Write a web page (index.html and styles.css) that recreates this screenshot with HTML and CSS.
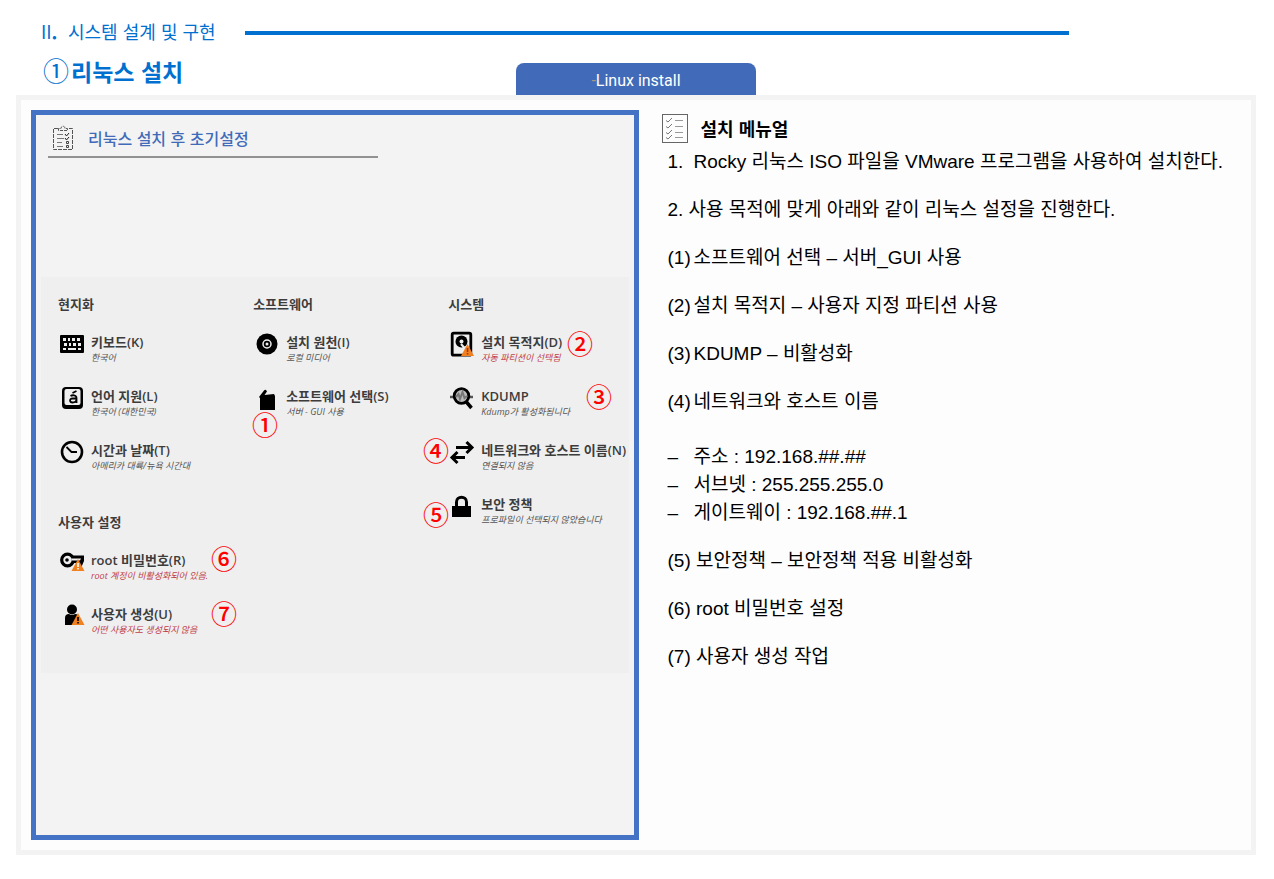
FILE: index.html
```html
<!DOCTYPE html>
<html lang="ko">
<head>
	<meta charset="utf-8">
	<meta name="viewport" content="width=device-width, initial-scale=1">
	<title>리눅스 설치</title>

	<link rel="stylesheet" href="styles.css">
</head>
<body>
	<header class="header">
		<div class="chapter">
			<p class="chapter-name"><span class="chapter-number">II<b>.</b></span>시스템 설계 및 구현</p>
			<div class="chapter-line"></div>
		</div>
		<div class="title-row">
			<h1 class="title"><span class="title-number">①</span>리눅스 설치</h1>
			<div class="tab"><span class="tab-dash">-</span>Linux install</div>
		</div>
	</header>

	<main class="frame">
		<section class="panel">
			<div class="panel-header">
				<svg class="panel-icon" width="22" height="26" viewBox="0 0 22 26" fill="none" stroke="#555">
					<path d="M6 3.500H1.500V24.500H20.500V3.500H16" stroke-dasharray="4 1"/>
					<path d="M6.500 5.500V3.500H9C9 .5 13 .5 13 3.500H15.500V5.500Z" stroke-dasharray="3 1"/>
					<path d="M5 9.500H11M5 13.500H12M5 17.500H10M5 21.500H11" stroke="#777"/>
					<path d="M13 9L14.500 11L17 8M13 13L14.500 15L17 12" stroke="#222"/>
					<path d="M14.500 16.500H16.500V18.500H14.500ZM14.500 20.500H16.500V22.500H14.500Z" stroke="#444"/>
				</svg>
				<h2 class="panel-title">리눅스 설치 후 초기설정</h2>
			</div>

			<div class="installer">
				<div class="col">
					<h3 class="group">현지화</h3>
					<button class="item">
						<svg class="icon" viewBox="0 0 24 24">
							<rect y="3" width="24" height="18" rx="1"/>
							<path d="M3 6h3v3H3zM8 6h2v3H8zM12 6h3v3h-3zM17 6h3v3h-3zM4 11h3v3H4zM9 11h2v3H9zM13 11h3v3h-3zM18 11h3v3h-3zM3 16h3v2H3zM8 16h8v2H8zM18 16h3v2h-3z" fill="#efefef"/>
						</svg>
						<span class="text"><b>키보드(K)</b><i>한국어</i></span>
					</button>
					<button class="item">
						<svg class="icon" viewBox="0 0 24 24">
							<rect x="2" y="1" width="21" height="22" rx="4"/>
							<rect x="4.500" y="3" width="16" height="16" rx="2" fill="#efefef"/>
							<path d="M10.500 10C12 9 16.500 8.500 16.500 12V17M16.500 12.500H12.500C9 12.500 9.500 16.500 12.500 16.500C15 16.500 16.500 15 16.500 13M12.500 7L16.500 5" fill="none" stroke="#000" stroke-width="1.800"/>
						</svg>
						<span class="text"><b>언어 지원(L)</b><i>한국어 (대한민국)</i></span>
					</button>
					<button class="item">
						<svg class="icon" viewBox="0 0 24 24" fill="none" stroke="#000">
							<circle cx="12" cy="12" r="10" stroke-width="2.600"/>
							<path d="M6.500 7L11.500 12H17" stroke-width="1.800"/>
						</svg>
						<span class="text"><b>시간과 날짜(T)</b><i>아메리카 대륙/뉴욕 시간대</i></span>
					</button>

					<h3 class="group group-user">사용자 설정</h3>
					<button class="item">
						<svg class="icon" viewBox="0 0 24 24">
							<path d="M11 5.500H24V11L21 18H17V13H11Z"/>
							<circle cx="7.500" cy="10" r="5.800" fill="#efefef" stroke="#000" stroke-width="3.200"/>
							<path d="M11.500 8.500H21L20 10.500H11.500Z" fill="#efefef"/>
							<circle cx="7" cy="10" r="1.800"/>
							<path d="M18 9L24.500 21H11.500Z" fill="#f08020"/>
							<path d="M17.200 13h1.600v4h-1.600zM17.200 18h1.600v1.500h-1.600z" fill="#fff"/>
						</svg>
						<span class="text"><b>root 비밀번호(R)</b><i class="warning">root 계정이 비활성화되어 있음.</i></span>
					</button>
					<button class="item">
						<svg class="icon" viewBox="0 0 24 24">
							<circle cx="12" cy="5.500" r="5"/>
							<path d="M5 21V14Q5 10 9 10Q12 12 15 10Q19 10 19 14V21Z"/>
							<path d="M18 9L24.500 21H11.500Z" fill="#f08020"/>
							<path d="M17.200 13h1.600v4h-1.600zM17.200 18h1.600v1.500h-1.600z"/>
						</svg>
						<span class="text"><b>사용자 생성(U)</b><i class="warning">어떤 사용자도 생성되지 않음</i></span>
					</button>
				</div>

				<div class="col">
					<h3 class="group">소프트웨어</h3>
					<button class="item">
						<svg class="icon" viewBox="0 0 24 24">
							<circle cx="12" cy="12" r="10.500"/>
							<circle cx="12" cy="12" r="4" fill="none" stroke="#efefef" stroke-width="1.500"/>
							<circle cx="12" cy="12" r="1.500" fill="#efefef"/>
						</svg>
						<span class="text"><b>설치 원천(I)</b><i>로컬 미디어</i></span>
					</button>
					<button class="item">
						<svg class="icon" viewBox="0 0 24 24">
							<path d="M4 11L9 4.500Q10 3.500 11 4L12 5.500L9.500 9L19 8L20 10V24H5V12Z"/>
						</svg>
						<span class="text"><b>소프트웨어 선택(S)</b><i>서버 - GUI 사용</i></span>
					</button>
				</div>

				<div class="col">
					<h3 class="group">시스템</h3>
					<button class="item">
						<svg class="icon" viewBox="0 0 24 24">
							<rect x="2.200" y="1.200" width="18.600" height="22" rx="1.500" fill="#efefef" stroke="#000" stroke-width="2.800"/>
							<circle cx="11.500" cy="9.500" r="6"/>
							<circle cx="11.500" cy="9.500" r="2" fill="#efefef"/>
							<path d="M11 12L18 20" stroke="#efefef" stroke-width="2"/>
							<path d="M17.500 12L24 24H11Z" fill="#f08020"/>
							<path d="M16.800 16h1.500v4h-1.500zM16.800 21h1.500v1.500h-1.500z" fill="#b03010"/>
						</svg>
						<span class="text"><b>설치 목적지(D)</b><i class="warning">자동 파티션이 선택됨</i></span>
					</button>
					<button class="item">
						<svg class="icon" viewBox="0 0 24 24" fill="none" stroke="#000">
							<path d="M0 11H5M18 11H23" stroke="#555" stroke-width="2.500"/>
							<circle cx="11.500" cy="10" r="7.300" fill="#bbb" stroke-width="2.800"/>
							<path d="M6 11L8.500 8L10 13L12.500 6L14.500 12L17 10" stroke="#777" stroke-width="2"/>
							<path d="M16 15.500L21.500 22" stroke-width="3.500"/>
						</svg>
						<span class="text"><b>KDUMP</b><i>Kdump가 활성화됩니다</i></span>
					</button>
					<button class="item">
						<svg class="icon" viewBox="0 0 24 24" fill="none" stroke="#000" stroke-width="3">
							<path d="M6 7.500H22M16.500 2L22 7.500L16.500 13M15 17.500H2M7.500 12L2 17.500L7.500 23"/>
						</svg>
						<span class="text"><b>네트워크와 호스트 이름(N)</b><i>연결되지 않음</i></span>
					</button>
					<button class="item">
						<svg class="icon" viewBox="0 0 24 24">
							<path d="M2 12H21V23H2Z"/>
							<path d="M6.500 13V8C6.500 1.800 16.500 1.800 16.500 8V13" fill="none" stroke="#000" stroke-width="3"/>
						</svg>
						<span class="text"><b>보안 정책</b><i>프로파일이 선택되지 않았습니다</i></span>
					</button>
				</div>

				<!-- step numbers laid over the installer -->
				<span class="step step1">①</span>
				<span class="step step2">②</span>
				<span class="step step3">③</span>
				<span class="step step4">④</span>
				<span class="step step5">⑤</span>
				<span class="step step6">⑥</span>
				<span class="step step7">⑦</span>
			</div>
		</section>

		<section class="manual">
			<div class="manual-header">
				<svg width="27" height="31" viewBox="0 0 27 31" fill="none" stroke="#777">
					<rect x="1.500" y="1.500" width="25" height="28" stroke="#666"/>
					<path d="M5 7.500L7 9L11 5M5 13.500L7 15L11 11M5 19.500L7 21L11 17M5 24.500L7 26L11 22"/>
					<path d="M14 7.500H22M14 13.500H22M14 19.500H22M14 24.500H22" stroke="#999"/>
				</svg>
				<h2 class="manual-title">설치 메뉴얼</h2>
			</div>
			<ul class="steps">
				<li><span class="num">1.</span>Rocky 리눅스 ISO 파일을 VMware 프로그램을 사용하여 설치한다.</li>
				<li>2. 사용 목적에 맞게 아래와 같이 리눅스 설정을 진행한다.</li>
				<li><span class="num">(1)</span>소프트웨어 선택 – 서버_GUI 사용</li>
				<li><span class="num">(2)</span>설치 목적지 – 사용자 지정 파티션 사용</li>
				<li><span class="num">(3)</span>KDUMP – 비활성화</li>
				<li><span class="num">(4)</span>네트워크와 호스트 이름
					<ul class="network">
						<li><span class="num">–</span>주소 : 192.168.##.##</li>
						<li><span class="num">–</span>서브넷 : 255.255.255.0</li>
						<li><span class="num">–</span>게이트웨이 : 192.168.##.1</li>
					</ul>
				</li>
				<li>(5) 보안정책 – 보안정책 적용 비활성화</li>
				<li>(6) root 비밀번호 설정</li>
				<li>(7) 사용자 생성 작업</li>
			</ul>
		</section>
	</main>
</body>
</html>
```
FILE: styles.css
```css
* {
	box-sizing: border-box;
}

body {
	min-height: 100vh;
	margin: 0;
	padding: 16px 18px 24px 16px;
	display: flex;
	flex-direction: column;
	background: #FFF;
	color: #000;
	font-family: "Noto Sans CJK KR", sans-serif;
}

h1, h2, h3, p, ul {
	margin: 0;
	padding: 0;
}

.chapter {
	display: flex;
	align-items: center;
	gap: 29px;
	height: 34px;
	padding: 0 187px 0 25px;
	color: #0070D0;
}

.chapter-name {
	font-size: 18px;
	line-height: 28px;
	padding-bottom: 4px;
}

.chapter-number {
	display: inline-block;
	width: 27px;
}

.chapter-line {
	flex: 1;
	height: 4px;
	background: #0070D0;
}

.title-row {
	display: grid;
	grid-template-columns: 1fr 240px 1fr;
	align-items: end;
}

.title {
	height: 45px;
	padding-left: 27px;
	color: #0070D0;
	font-size: 23px;
	line-height: 40px;
	white-space: nowrap;
}

.title-number {
	margin-right: 2px;
	font-size: 26px;
	font-weight: normal;
}

.tab {
	height: 32px;
	border-radius: 8px 8px 0 0;
	background: #416BB9;
	color: #FFF;
	font-family: Roboto, sans-serif;
	font-size: 16px;
	line-height: 35px;
	text-align: center;
}

.tab-dash {
	color: #A89A80;
}

.frame {
	flex: 1;
	display: grid;
	grid-template-columns: 1.05fr 1fr;
	gap: 22px;
	padding: 10px;
	border: 5px solid #F3F3F3;
	background: #FDFDFD;
}

.panel {
	padding: 5px;
	border: 5px solid #4472C4;
	background: #F3F3F3;
}

.panel-header {
	display: flex;
	align-items: center;
	gap: 14px;
	width: 330px;
	height: 38px;
	margin-left: 7px;
	padding-left: 4px;
	border-bottom: 2px solid #929292;
}

.panel-title {
	color: #416BB9;
	font-size: 16px;
	font-weight: 500;
}

.installer {
	position: relative;
	display: grid;
	grid-template-columns: 14fr 14fr 13fr;
	height: 396px;
	margin-top: 119px;
	padding: 16px 0 0 17px;
	background: #EFEFEF;
}

.group {
	height: 22px;
	margin-bottom: 17px;
	color: #3C3C3C;
	font-size: 13px;
	font-weight: 700;
	line-height: 22px;
}

.group-user {
	margin-top: 17px;
}

.item {
	display: flex;
	align-items: flex-start;
	gap: 7px;
	height: 54px;
	margin: 0;
	padding: 0 0 0 2px;
	border: 0;
	background: none;
	color: #3C3C3C;
	font-family: "Open Sans", "Noto Sans CJK KR", sans-serif;
	text-align: left;
	white-space: nowrap;
}

.icon {
	width: 24px;
	height: 24px;
	overflow: visible;
}

.text b, .text i {
	display: block;
}

.text b {
	font-size: 13px;
	font-weight: 600;
	line-height: 20px;
}

.text i {
	color: #555;
	font-size: 9px;
	line-height: 12px;
}

.text .warning {
	color: #C0404A;
}

.step {
	position: absolute;
	color: #F00;
	font-size: 26px;
	font-weight: 500;
	line-height: 26px;
}

.step1 { left: 211px; top: 134px; }
.step2 { left: 526px; top: 53px; }
.step3 { left: 545px; top: 106px; }
.step4 { left: 382px; top: 160px; }
.step5 { left: 382px; top: 224px; }
.step6 { left: 170px; top: 268px; }
.step7 { left: 170px; top: 323px; }

.manual-header {
	display: flex;
	align-items: flex-start;
	gap: 12px;
	height: 38px;
	padding-top: 3px;
}

.manual-title {
	font-size: 18px;
	font-weight: 700;
	line-height: 30px;
}

.steps {
	padding-left: 6px;
	font-family: "Liberation Sans", "Noto Sans CJK KR", sans-serif;
	font-size: 19px;
	line-height: 28px;
	list-style: none;
}

.steps > li {
	margin-bottom: 20px;
	white-space: nowrap;
}

.network {
	margin-top: 27px;
	list-style: none;
}

.num {
	display: inline-block;
	width: 26px;
}
```
